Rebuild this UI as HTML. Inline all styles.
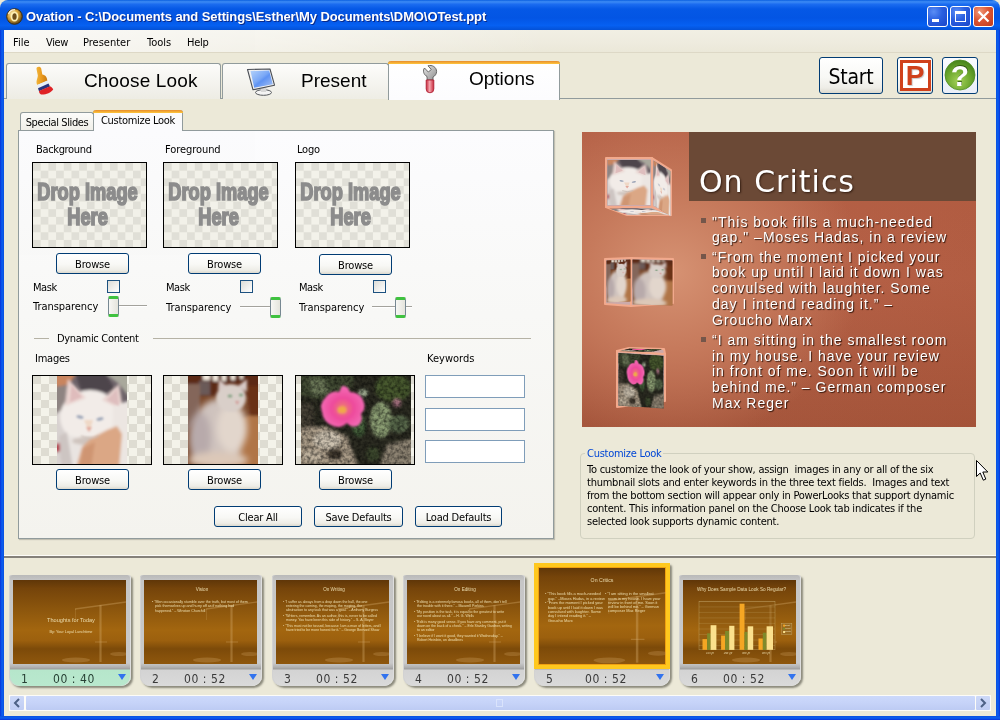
<!DOCTYPE html>
<html><head><meta charset="utf-8"><title>Ovation</title>
<style>
*{box-sizing:border-box;margin:0;padding:0}
html,body{width:1000px;height:720px;overflow:hidden;background:#ECE9D8}
body{will-change:transform;opacity:.9999}
body{position:relative;font-family:"DejaVu Sans Condensed","DejaVu Sans","Liberation Sans",sans-serif;font-size:11px;color:#000}
.abs,.abs-all>*{position:absolute}
div,span,svg{position:absolute}
/* ---------- window chrome ---------- */
#titlebar{left:0;top:0;width:1000px;height:30px;background:linear-gradient(180deg,#0a5fe0 0%,#3d8bf5 6%,#1b6cf0 14%,#0558e6 30%,#0355e4 60%,#0660f2 85%,#0451d6 100%);border-radius:8px 8px 0 0}
#title{left:26px;top:9px;color:#fff;font-family:"Liberation Sans",sans-serif;font-weight:bold;font-size:13px;letter-spacing:-0.1px;white-space:nowrap;text-shadow:1px 1px 0 #0a2a8a}
#bl{left:0;top:30px;width:4px;height:690px;background:linear-gradient(90deg,#0831d9,#0a5ff0 50%,#0a4fe0)}
#br{left:996px;top:30px;width:4px;height:690px;background:linear-gradient(90deg,#0a4fe0,#0a5ff0 50%,#0831d9)}
#bb{left:0;top:716px;width:1000px;height:4px;background:linear-gradient(180deg,#0a4fe0,#0a5ff0 50%,#0831d9)}
#menubar{left:4px;top:30px;width:992px;height:23px;background:linear-gradient(90deg,rgba(255,255,255,.7) 0%,rgba(255,255,255,.45) 25%,rgba(255,255,255,0) 55%),linear-gradient(180deg,#f1efe4 0%,#eeebde 60%,#ebe8d9 100%);border-bottom:1px solid #ddd8c6}
.mi{top:36px;font-size:11px;white-space:nowrap}
.wb{top:6px;width:21px;height:21px;border:1px solid #fff;border-radius:3px;background:radial-gradient(circle at 30% 25%,#5a8df5 0%,#2a5fe0 45%,#1a45c8 100%)}
.wb.close{background:radial-gradient(circle at 30% 25%,#f09a7a 0%,#dd5533 45%,#c03a1c 100%)}
/* ---------- big tabs ---------- */
.btab{top:63px;height:36px;border:1px solid #919b9c;border-bottom:none;border-radius:3px 3px 0 0;background:linear-gradient(180deg,#fdfdfb 0%,#f4f3ee 60%,#eeede5 100%)}
.btab.sel{top:61px;height:39px;background:linear-gradient(180deg,#fff 0%,#fcfcfe 100%);border-top:none}
.btab.sel:before{content:"";position:absolute;left:-1px;right:-1px;top:0;height:3px;background:linear-gradient(180deg,#e68b2c,#ffc73c);border-radius:3px 3px 0 0}
.btxt{font-family:"Liberation Sans",sans-serif;font-size:19px;white-space:nowrap}
#hline{left:4px;top:98px;width:992px;height:1px;background:#919b9c}
.xpbtn{border:1px solid #003c74;border-radius:3px;background:linear-gradient(180deg,#fff 0%,#f8f8f5 55%,#eeede7 85%,#dcd9ce 100%);text-align:center;white-space:nowrap}
/* ---------- left panel ---------- */
#panel{left:18px;top:130px;width:536px;height:409px;box-shadow:1px 1px 1px rgba(0,0,0,.18);border:1px solid #919b9c;background:linear-gradient(180deg,#fcfcfe 0%,#f8f8f6 45%,#f4f3ee 100%)}
.stab{letter-spacing:-.3px;border:1px solid #919b9c;border-bottom:none;border-radius:3px 3px 0 0;background:linear-gradient(180deg,#fdfdfb 0%,#f1f0ea 100%);font-size:11px;text-align:center;white-space:nowrap}
.stab.sel{background:#fcfcfe;border-top:none}
.stab.sel:before{content:"";position:absolute;left:-1px;right:-1px;top:0;height:3px;background:linear-gradient(180deg,#e68b2c,#ffc73c);border-radius:3px 3px 0 0}
.lbl{font-size:11px;white-space:nowrap;line-height:13px;letter-spacing:-.25px}
.box{border:1px solid #000;background:conic-gradient(#f4f3ea 25%,#dedcd2 0 50%,#f4f3ea 0 75%,#dedcd2 0) 0 0/16px 16px;overflow:hidden}
.drop{left:0;top:0;width:100%;height:100%;background:conic-gradient(#f3f2ea 25%,#e0dfd7 0 50%,#f3f2ea 0 75%,#e0dfd7 0) 0 0/15.4px 15.4px;font-family:"Liberation Sans",sans-serif;font-weight:bold;color:#8c8c8c;font-size:24px;line-height:25px;text-align:center;-webkit-text-stroke:1.7px #8c8c8c}
.drop span{position:absolute;left:-32px;right:-28px;transform:scaleX(.76)}
.bbtn{width:73px;height:21px;font-size:11px;line-height:21px;letter-spacing:-.2px}
.chk{width:13px;height:13px;border:1px solid #1c5180;background:linear-gradient(135deg,#dcdcd7,#fff)}
.trk{height:2px;border-top:1px solid #a3a29c;border-bottom:1px solid #fff}
.thm{width:11px;height:21px;border:1px solid #778892;border-radius:2px;background:linear-gradient(90deg,#f7f7f4,#e4e4dc);border-top:3px solid #3fc23f;border-bottom:3px solid #3fc23f}
.tf{width:100px;height:23px;border:1px solid #7f9db9;background:#fff}

/* ---------- preview ---------- */
#pv{left:582px;top:132px;width:394px;height:295px;overflow:hidden;background:radial-gradient(ellipse 190px 170px at 90px 140px,#d69273 0%,#c67a5c 45%,rgba(181,97,69,0) 100%),linear-gradient(90deg,rgba(160,70,40,0) 40%,rgba(160,70,40,.18) 100%),linear-gradient(180deg,#b46046 0%,#b66248 50%,#a5563c 100%)}
#pvt{left:107px;top:0;width:287px;height:69px;background:#6b4936}
#pvh{left:117px;top:30px;font-family:"DejaVu Sans","Liberation Sans",sans-serif;font-size:30px;letter-spacing:1px;line-height:40px;color:#fff;white-space:nowrap;text-shadow:1px 1px 2px rgba(40,20,10,.8)}
.pl{left:130px;font-family:"Liberation Sans",sans-serif;font-size:14px;line-height:16px;color:#fff;white-space:nowrap;letter-spacing:1px;text-shadow:1px 1px 1px rgba(40,15,5,.9)}
.pb{left:119px;width:5px;height:5px;background:#74564a}
/* ---------- group box ---------- */
#gb{left:580px;top:453px;width:395px;height:86px;border:1px solid #d0d0bf;border-radius:4px}
#gbl{left:585px;top:447px;padding:0 2px;background:#ECE9D8;color:#0046d5;font-size:11px;line-height:13px;white-space:nowrap;letter-spacing:-.27px}
.gt{left:587px;font-size:11px;line-height:13px;white-space:pre;letter-spacing:-.24px}
/* ---------- filmstrip ---------- */
#sep{left:4px;top:556px;width:992px;height:2px;background:#85817a;box-shadow:0 -1px 0 #fdfcf8}
.th{width:122px;height:111px;top:575px;border-radius:3px 3px 10px 10px;background:linear-gradient(180deg,#b9b9b9 0,#c6c6c6 6px,#c9c9c9 88px,#b2b2b2 92px,#9e9e9e 94px,#d3d3d3 95px,#dadada 111px);box-shadow:2px 2px 2px rgba(60,60,50,.55),inset -1px 0 0 #dedede,inset 1px 0 0 #d2d2d2}
.th.g{background:linear-gradient(180deg,#b9b9b9 0,#c6c6c6 6px,#c9c9c9 88px,#b2b2b2 92px,#9e9e9e 94px,#b6e6cb 95px,#b9e8ce 111px)}
.sl{left:4px;top:5px;width:113px;height:84px;overflow:hidden;background:linear-gradient(180deg,#5f3608 0%,#75440a 10%,#8c560d 35%,#a3660f 60%,#9c600e 72%,#7c4a09 82%,#85500b 90%,#8e570d 100%)}
.th .n,.th .t{top:96.5px;font-family:"DejaVu Sans Condensed","Liberation Sans",sans-serif;font-size:12px;line-height:15px;color:#3a3a3a;white-space:nowrap;letter-spacing:.55px}
.th.g .n,.th.g .t{color:#274034}
.th .n{left:12px}.th .t{left:44px}
.th .a{left:109px;top:99px;width:0;height:0;border-left:4.5px solid transparent;border-right:4.5px solid transparent;border-top:6px solid #3273ee}
.th.s{top:563px;width:136px;height:123px;border-radius:2px 2px 10px 10px;background:linear-gradient(180deg,#ffc81e 0,#ffc81e 105px,#a8a8a8 106px,#d3d3d3 107px,#dadada 123px)}
.th.s .sl{left:0;top:0;width:136px;height:106px;border:4px solid #ffc81e;box-shadow:inset 0 0 0 1px #f0a010}
.th.s .n,.th.s .t{top:108.5px}.th.s .t{left:51px}.th.s .a{top:111px;left:122px}
.st{color:#f3e6b8;font-family:"Liberation Sans",sans-serif;white-space:nowrap;transform-origin:0 0;opacity:.9}
/* ---------- scrollbar ---------- */
#sb{left:9px;top:695px;width:982px;height:16px;background:#fdfcf8}
.sba{top:1px;width:14px;height:14px;border-radius:1px;background:linear-gradient(180deg,#cdd9f8,#c0cdf3)}
#sbt{left:17px;top:1px;width:949px;height:14px;border-radius:1px;background:linear-gradient(180deg,#ccd9fb 0%,#c6d3f8 50%,#bdcbf3 100%)}
</style></head><body>
<div id="titlebar"></div>
<svg style="left:5.500px;top:7.500px" width="17" height="17" viewBox="0 0 17 17"><defs><radialGradient id="ig" cx=".4" cy=".35" r=".75"><stop offset="0" stop-color="#fff6c8"/><stop offset=".45" stop-color="#d8a238"/><stop offset="1" stop-color="#3c2c12"/></radialGradient></defs><circle cx="8.500" cy="8.500" r="7.800" fill="url(#ig)" stroke="#3a2c14" stroke-width="1"/><path d="M2.500 6A6.500 6.500 0 0 1 9 1.600" stroke="#fff" stroke-width="1.200" fill="none" opacity=".8"/><ellipse cx="8.500" cy="8.500" rx="3" ry="4.200" fill="#6b4c1c" stroke="#fff0b4" stroke-width="1.700"/></svg>
<div id="title">Ovation - C:\Documents and Settings\Esther\My Documents\DMO\OTest.ppt</div>
<div class="wb" style="left:927px"><div style="left:4px;top:12px;width:7px;height:3px;background:#fff"></div></div>
<div class="wb" style="left:950px"><div style="left:4px;top:4px;width:11px;height:11px;border:1px solid #fff;border-top:3px solid #fff"></div></div>
<div class="wb close" style="left:973px"><svg style="left:3px;top:3px" width="13" height="13" viewBox="0 0 13 13"><path d="M1.5 1.5L11.5 11.5M11.5 1.5L1.5 11.5" stroke="#fff" stroke-width="2.2"/></svg></div>
<div id="bl"></div><div id="br"></div><div id="bb"></div>
<div id="menubar"></div>
<div class="mi" style="left:13px">File</div>
<div class="mi" style="left:46px;letter-spacing:-.4px">View</div>
<div class="mi" style="left:83px">Presenter</div>
<div class="mi" style="left:147px">Tools</div>
<div class="mi" style="left:187px;letter-spacing:-.3px">Help</div>

<!-- big tabs -->
<div id="hline"></div>
<div class="btab" style="left:6px;width:215px"></div>
<div class="btab" style="left:222px;width:167px"></div>
<div class="btab sel" style="left:388px;width:172px"></div>
<svg style="left:30px;top:64px" width="30" height="34" viewBox="30 64 30 34"><defs><linearGradient id="bh" x1="0" y1="0" x2="1" y2="0"><stop offset="0" stop-color="#f2b43a"/><stop offset=".5" stop-color="#e8981c"/><stop offset="1" stop-color="#c87810"/></linearGradient></defs><path d="M36.500 69C36 66.500 40.500 66 41.200 68.500L42.300 74.500C45.500 74.800 47.200 77.500 47.300 81L37.200 85C35.500 81 37.800 78.500 37.800 75.500Z" fill="url(#bh)"/><path d="M37 85L47.300 80.600L48.500 83.600L38 88.300Z" fill="#e6effb"/><path d="M38 88.300L48.500 83.600L50 86.500L39 91.300Z" fill="#27347f"/><path d="M39 91L50 86.300C52 87.500 53 88.500 53.200 89.500C51 93 45 95 41 94.500C39.500 93.500 39 92.500 39 91Z" fill="#df2226"/></svg>
<svg style="left:244px;top:64px" width="36" height="34" viewBox="244 64 36 34"><defs><linearGradient id="ms" x1="0" y1="0" x2="1" y2="1"><stop offset="0" stop-color="#b4d2fb"/><stop offset=".45" stop-color="#7aa8f6"/><stop offset=".55" stop-color="#5f93f3"/><stop offset="1" stop-color="#a9c4f4"/></linearGradient></defs><ellipse cx="263.500" cy="92.500" rx="8" ry="2.800" fill="#f4f4f4" stroke="#55585c" stroke-width="1"/><path d="M260.500 88L266.500 87L266 92H261Z" fill="#d8d8d8"/><path d="M247.500 69.500L270 69L274.500 85.200L253 89.800Z" fill="#f2f2f2" stroke="#4a4e55" stroke-width="1.100" stroke-linejoin="round"/><path d="M250.500 71L269.200 70.500L272.800 84.200L254.200 87.800Z" fill="url(#ms)"/></svg>
<svg style="left:418px;top:62px" width="24" height="34" viewBox="418 62 24 34"><defs><linearGradient id="wh" x1="0" y1="0" x2="1" y2="0"><stop offset="0" stop-color="#c8283c"/><stop offset=".45" stop-color="#f4a6ae"/><stop offset="1" stop-color="#c8283c"/></linearGradient><linearGradient id="wg" x1="0" y1="0" x2="1" y2="1"><stop offset="0" stop-color="#e6e6e6"/><stop offset="1" stop-color="#8e8e8e"/></linearGradient></defs><path d="M427.200 80L427 76.500C423.500 74.500 422.500 70.500 424.500 68L428.300 72L431.300 69.500L428 65.800C432 64.500 436.500 67 436.600 71.500C436.600 74 435 76 433 77L433 80Z" fill="url(#wg)" stroke="#5a5a5a" stroke-width=".9" stroke-linejoin="round"/><path d="M426.200 80H433.800V89A3.800 3.800 0 0 1 426.200 89Z" fill="url(#wh)" stroke="#b02034" stroke-width=".9"/></svg>
<div class="btxt" style="left:84px;top:70px;letter-spacing:.15px">Choose Look</div>
<div class="btxt" style="left:301px;top:70px">Present</div>
<div class="btxt" style="left:469px;top:68px">Options</div>
<div class="xpbtn" style="left:819px;top:57px;width:64px;height:37px;font-size:21px;line-height:39px;letter-spacing:-.2px">Start</div>
<div class="xpbtn" style="left:897px;top:57px;width:36px;height:37px"><div style="left:2px;top:2px;width:31px;height:31px;border:3px solid #d0411c;background:#fff"></div><div style="left:0;top:1px;width:34px;text-align:center;font-family:'Liberation Sans',sans-serif;font-weight:bold;font-size:28px;line-height:34px;color:#d0411c;text-shadow:1px 1px 1px #c9c9c9">P</div></div>
<div class="xpbtn" style="left:942px;top:57px;width:36px;height:37px;background:linear-gradient(180deg,#fafcff,#e9eef8)"><svg style="left:1px;top:1px" width="32" height="32" viewBox="0 0 32 32"><defs><radialGradient id="qg" cx=".45" cy=".7" r=".75"><stop offset="0" stop-color="#a6d25a"/><stop offset=".55" stop-color="#6aa62c"/><stop offset="1" stop-color="#3f7d18"/></radialGradient></defs><circle cx="16" cy="16" r="15" fill="url(#qg)" stroke="#4d8a22" stroke-width=".8"/><text x="16.500" y="26" text-anchor="middle" font-family="Liberation Sans,sans-serif" font-weight="bold" font-size="30" fill="#1d3a0a" opacity=".7">?</text><text x="16" y="27" text-anchor="middle" font-family="Liberation Sans,sans-serif" font-weight="bold" font-size="30" fill="#fff">?</text></svg></div>

<!-- left panel -->
<div id="panel"></div>
<div class="stab" style="left:20px;top:112px;width:74px;height:18px;line-height:19px;letter-spacing:-.4px">Special Slides</div>
<div class="stab sel" style="left:93px;top:110px;width:90px;height:21px;line-height:22px">Customize Look</div>
<div id="pc" style="left:0;top:0">
<div class="lbl" style="left:36px;top:143px;letter-spacing:-.34px">Background</div>
<div class="lbl" style="left:165px;top:143px;letter-spacing:-.07px">Foreground</div>
<div class="lbl" style="left:297px;top:143px;letter-spacing:-.22px">Logo</div>
<div class="box" style="left:32px;top:162px;width:115px;height:86px"><div class="drop"><span style="top:16px">Drop Image</span><span style="top:41px">Here</span></div></div>
<div class="box" style="left:163px;top:162px;width:115px;height:86px"><div class="drop"><span style="top:16px">Drop Image</span><span style="top:41px">Here</span></div></div>
<div class="box" style="left:295px;top:162px;width:115px;height:86px"><div class="drop"><span style="top:16px">Drop Image</span><span style="top:41px">Here</span></div></div>
<div class="xpbtn bbtn" style="left:56px;top:253px">Browse</div>
<div class="xpbtn bbtn" style="left:188px;top:253px">Browse</div>
<div class="xpbtn bbtn" style="left:319px;top:254px">Browse</div>
<div class="lbl" style="left:33px;top:281px;letter-spacing:-.45px">Mask</div>
<div class="lbl" style="left:166px;top:281px;letter-spacing:-.45px">Mask</div>
<div class="lbl" style="left:299px;top:281px;letter-spacing:-.45px">Mask</div>
<div class="chk" style="left:107px;top:280px"></div>
<div class="chk" style="left:240px;top:280px"></div>
<div class="chk" style="left:373px;top:280px"></div>
<div class="lbl" style="left:33px;top:300px;letter-spacing:-.05px">Transparency</div>
<div class="lbl" style="left:166px;top:301px;letter-spacing:-.05px">Transparency</div>
<div class="lbl" style="left:299px;top:301px;letter-spacing:-.05px">Transparency</div>
<div class="trk" style="left:112px;top:305px;width:35px"></div>
<div class="trk" style="left:240px;top:306px;width:38px"></div>
<div class="trk" style="left:372px;top:306px;width:40px"></div>
<div class="thm" style="left:108px;top:296px"></div>
<div class="thm" style="left:270px;top:297px"></div>
<div class="thm" style="left:395px;top:297px"></div>
<div style="left:34px;top:338px;width:15px;height:1px;background:#b5b2a5"></div>
<div style="left:153px;top:338px;width:378px;height:1px;background:#b5b2a5"></div>
<div class="lbl" style="left:57px;top:332px;letter-spacing:-.31px">Dynamic Content</div>
<div class="lbl" style="left:35px;top:352px;letter-spacing:-.23px">Images</div>
<div class="lbl" style="left:427px;top:352px;letter-spacing:0">Keywords</div>
<div class="box" id="img1" style="left:32px;top:375px;width:120px;height:90px"><svg id="cat1" style="left:24px;top:0" width="70" height="88" viewBox="0 0 70 88"><defs><filter id="bl1" x="-10%" y="-10%" width="120%" height="120%"><feGaussianBlur stdDeviation="1.6"/></filter><filter id="bl2" x="-10%" y="-10%" width="120%" height="120%"><feGaussianBlur stdDeviation=".8"/></filter><filter id="bl3" x="-20%" y="-20%" width="140%" height="140%"><feGaussianBlur stdDeviation="3"/></filter><clipPath id="cp1"><rect width="70" height="88"/></clipPath></defs><g id="c1g" clip-path="url(#cp1)"><rect width="70" height="88" fill="#6c6268"/><g filter="url(#bl1)"><path d="M-4 -4H20L12 9L-4 11Z" fill="#c9855f"/><path d="M-4 11L12 9L10 40L-4 44Z" fill="#8e8482"/><path d="M46 -4H76V26L62 8Z" fill="#a9a89c"/><path d="M18 -4H48L58 14L40 20L24 14Z" fill="#4d444c"/><path d="M-4 40L10 30L30 92H-4Z" fill="#d8d2d0"/><path d="M-2 68L3 67L3 75L-2 77Z" fill="#b0283a"/><ellipse cx="33" cy="41" rx="30" ry="27" fill="#f2ece8"/><path d="M8 30L11 3L29 22Z" fill="#ead4d0"/><path d="M45 24L62 8L66 34Z" fill="#e8d2ce"/><path d="M56 30L74 24V92H54Z" fill="#ece6e2"/><path d="M8 58L30 64L26 92H2Z" fill="#e9e4e1"/><ellipse cx="30" cy="65" rx="15" ry="4" fill="#cfc4be"/><path d="M2 60L10 56L16 92H4Z" fill="#cdc5c2"/><path d="M19 92L25 71L33 63L50 54L60 50L65 58L62 92Z" fill="#dba785"/><path d="M26 72L38 66L34 92H22Z" fill="#cf9572"/></g><g filter="url(#bl2)"><path d="M13 26L14.500 9L25 21Z" fill="#dfbcbc"/><path d="M50 24L60 13L62 30Z" fill="#debebe"/><ellipse cx="23" cy="41" rx="3.600" ry="1.500" fill="#9aa3b6" transform="rotate(12 23 41)"/><ellipse cx="43" cy="43" rx="3.600" ry="1.500" fill="#9aa3b6" transform="rotate(-12 43 43)"/><path d="M29 51L35 51L32 56Z" fill="#e2a79a"/><path d="M27 44L36 44L34 51L30 51Z" fill="#efd8c6"/><path d="M24 60Q32 64 42 60" stroke="#c4b6ae" stroke-width="1.200" fill="none"/></g></g></svg></div>
<div class="box" id="img2" style="left:163px;top:375px;width:120px;height:90px"><svg id="cat2" style="left:24px;top:0" width="70" height="88" viewBox="0 0 70 88"><defs><clipPath id="cp2"><rect width="70" height="88"/></clipPath></defs><g id="c2g" clip-path="url(#cp2)"><rect width="70" height="88" fill="#7c4a2c"/><g filter="url(#bl1)"><rect x="-4" y="-4" width="78" height="24" fill="#5b2c18"/><rect x="15" y="-3" width="7" height="7" fill="#f4ece0"/><rect x="25" y="-3" width="5" height="8" fill="#f4ece0"/><rect x="34" y="-3" width="4" height="8" fill="#f4ece0"/><rect x="43" y="-3" width="4" height="7" fill="#f4ece0"/><rect x="52" y="-3" width="3" height="6" fill="#f0e4d4"/><rect x="11" y="5" width="11" height="14" fill="#6a5a58"/><path d="M-4 8H12V40L-4 60Z" fill="#84665a"/><path d="M50 44L74 34V92H40Z" fill="#b07446"/><path d="M58 10H74V40L62 40Z" fill="#6a3018"/></g><g filter="url(#bl3)"><ellipse cx="30" cy="58" rx="26" ry="35" fill="#cfc3be"/><ellipse cx="12" cy="62" rx="11" ry="26" fill="#b8aaab"/><ellipse cx="44" cy="52" rx="15" ry="24" fill="#e2d6cc"/><ellipse cx="30" cy="84" rx="30" ry="8" fill="#dcc8b8"/></g><g filter="url(#bl1)"><ellipse cx="43" cy="22" rx="15" ry="14" fill="#d9cfc9"/><path d="M30 14L31 3L39 10Z" fill="#d8cbc8"/><path d="M50 10L59 3L59 16Z" fill="#d8cbc8"/></g><g filter="url(#bl2)"><ellipse cx="42" cy="20" rx="2.400" ry="1.500" fill="#86a284"/><ellipse cx="53" cy="19" rx="2.200" ry="1.500" fill="#86a284"/><path d="M47 25L51 25L49.500 29Z" fill="#d29a96"/></g></g></svg></div>
<div class="box" id="img3" style="left:295px;top:375px;width:120px;height:90px"><svg id="flw" style="left:5px;top:0" width="110" height="88" viewBox="0 0 110 88"><defs><clipPath id="cp3"><rect width="110" height="88"/></clipPath><radialGradient id="fg" cx=".5" cy=".55" r=".5"><stop offset="0" stop-color="#f2a04a"/><stop offset=".2" stop-color="#ee6a80"/><stop offset=".5" stop-color="#ee4a9c"/><stop offset="1" stop-color="#f368b2"/></radialGradient><filter id="nz" x="0" y="0" width="100%" height="100%"><feTurbulence type="fractalNoise" baseFrequency=".3" numOctaves="2" seed="7"/><feColorMatrix values="0 0 0 0 0  0 0 0 0 0  0 0 0 0 0  1.800 0 0 0 -.62"/></filter></defs><g id="c3g" clip-path="url(#cp3)"><rect width="110" height="88" fill="#2b2b21"/><g filter="url(#bl1)"><path d="M-4 -4H56L50 12L20 24L-4 18Z" fill="#414a32"/><path d="M8 2L24 4L28 16L12 20Z" fill="#6c7858"/><ellipse cx="92" cy="12" rx="18" ry="14" fill="#46592f"/><ellipse cx="80" cy="44" rx="11" ry="18" fill="#8a9c72"/><ellipse cx="98" cy="48" rx="11" ry="9" fill="#56664a"/><ellipse cx="96" cy="27" rx="4" ry="4" fill="#b07888"/><ellipse cx="62" cy="17" rx="5" ry="4" fill="#98a48a"/><path d="M-4 52L24 50L46 60L58 92H-4Z" fill="#a79985"/><ellipse cx="26" cy="64" rx="14" ry="9" fill="#cdc2b0"/><ellipse cx="12" cy="80" rx="10" ry="6" fill="#bdb09c"/><path d="M-4 26L12 28L14 50L-4 54Z" fill="#453f34"/><ellipse cx="34" cy="78" rx="8" ry="6" fill="#40392e"/><path d="M86 68L114 62V92H78Z" fill="#8d8372"/><ellipse cx="58" cy="50" rx="7" ry="11" fill="#44603a"/><ellipse cx="72" cy="78" rx="7" ry="7" fill="#3e4a2e"/></g><rect width="110" height="88" fill="#15150e" filter="url(#nz)" opacity=".6"/><g filter="url(#bl2)"><path d="M41 10Q47 9 49 16Q58 16 62 24Q66 32 60 38Q63 46 56 50Q50 52 46 47Q40 53 32 50Q22 46 21 36Q18 28 24 22Q30 14 38 16Z" fill="url(#fg)"/><ellipse cx="41" cy="34" rx="4.500" ry="3.500" fill="#f0a84a"/></g></g></svg></div>
<div class="xpbtn bbtn" style="left:56px;top:469px">Browse</div>
<div class="xpbtn bbtn" style="left:188px;top:469px">Browse</div>
<div class="xpbtn bbtn" style="left:319px;top:469px">Browse</div>
<div class="tf" style="left:425px;top:375px"></div>
<div class="tf" style="left:425px;top:408px"></div>
<div class="tf" style="left:425px;top:440px"></div>
<div class="xpbtn bbtn" style="left:214px;top:506px;width:88px">Clear All</div>
<div class="xpbtn bbtn" style="left:314px;top:506px;width:89px">Save Defaults</div>
<div class="xpbtn bbtn" style="left:415px;top:506px;width:87px">Load Defaults</div>
</div>

<!-- preview -->
<div id="pv">
<svg style="left:0;top:0" width="395" height="296" viewBox="0 0 395 296">
<g stroke="#f2a98c" stroke-width="2" stroke-linejoin="round" fill="#caa">
<polygon points="24,26 70,26 70,75 24,75"/><polygon points="70,26 89,38 89,83 70,75"/><polygon points="24,75 70,75 89,83 45,83"/>
<polygon points="23,127 49,126 49,174 23,172"/><polygon points="49,126 91,127 91,171 49,174"/>
<polygon points="35,219 83,222 83,269 35,275"/><polygon points="35,219 47,216 82,217 83,222"/>
</g>
<use href="#c1g" transform="matrix(.614 0 0 .511 25.500 28)"/>
<use href="#c1g" transform="matrix(.243 .154 0 .511 71.500 28.500)"/>
<use href="#c1g" transform="matrix(.6 0 .21 .07 27 76.500)"/>
<use href="#c2g" transform="matrix(.343 -.013 0 .477 24.500 128.500)"/>
<use href="#c2g" transform="matrix(.571 .013 0 .511 50.500 127.500)"/>
<use href="#c3g" transform="matrix(.41 .025 0 .6 36.500 221)"/>
<use href="#c3g" transform="matrix(.3 .008 -.12 .03 47.500 216.500)"/>
</svg><div id="pvt"></div>
<div id="pvh">On Critics</div>
<div class="pb" style="top:86px"></div>
<div class="pl" style="top:82px">"This book fills a much-needed</div>
<div class="pl" style="top:97px">gap." –Moses Hadas, in a review</div>
<div class="pb" style="top:122px"></div>
<div class="pl" style="top:117px">“From the moment I picked your</div>
<div class="pl" style="top:132px">book up until I laid it down I was</div>
<div class="pl" style="top:148px">convulsed with laughter. Some</div>
<div class="pl" style="top:164px">day I intend reading it.” –</div>
<div class="pl" style="top:180px">Groucho Marx</div>
<div class="pb" style="top:205px"></div>
<div class="pl" style="top:200px">“I am sitting in the smallest room</div>
<div class="pl" style="top:216px">in my house. I have your review</div>
<div class="pl" style="top:231px">in front of me. Soon it will be</div>
<div class="pl" style="top:247px">behind me.” – German composer</div>
<div class="pl" style="top:263px">Max Reger</div>
</div>
<!-- group box -->
<div id="gb"></div>
<div id="gbl">Customize Look</div>
<div class="gt" style="top:463px">To customize the look of your show, assign  images in any or all of the six</div>
<div class="gt" style="top:476px">thumbnail slots and enter keywords in the three text fields.  Images and text</div>
<div class="gt" style="top:489px">from the bottom section will appear only in PowerLooks that support dynamic</div>
<div class="gt" style="top:502px">content. This information panel on the Choose Look tab indicates if the</div>
<div class="gt" style="top:515px">selected look supports dynamic content.</div>
<svg style="left:975px;top:459px" width="14" height="23" viewBox="-1 -1 14 23"><path d="M.5 .5V16.500L4.200 13L7.300 20.200L9.800 19.100L6.800 12H11.800Z" fill="#fff" stroke="#000" stroke-width="1" stroke-linejoin="miter"/></svg>
<!-- filmstrip -->
<div id="sep"></div>
<div class="th g" style="left:9px"><div class="sl"><svg style="left:0;top:0" width="113" height="84" viewBox="0 0 113 84" preserveAspectRatio="none"><g stroke="#d2a868" stroke-opacity=".38" fill="none"><path d="M62 29L113 22" stroke-width="1.300"/><path d="M87.500 25V82" stroke-width="2.200"/><path d="M82 62H94" stroke-width="1"/><path d="M62.500 29V40" stroke-width=".6"/></g><ellipse cx="63" cy="80" rx="14" ry="2.500" fill="#c99a5c" fill-opacity=".35"/><ellipse cx="106" cy="74" rx="9" ry="2" fill="#c99a5c" fill-opacity=".3"/></svg><div class="st" style="left:-26.0px;width:300px;text-align:center;top:36.6px;font-size:10px;line-height:12px;transform:scale(0.560)">Thoughts for Today</div><div class="st" style="left:1.0px;width:300px;text-align:center;top:49.7px;font-size:10px;line-height:12px;transform:scale(0.380)">By: Your Loyal Lunchtime</div></div><div class="n">1</div><div class="t">00 : 40</div><div class="a"></div></div>
<div class="th" style="left:140px"><div class="sl"><svg style="left:0;top:0" width="113" height="84" viewBox="0 0 113 84" preserveAspectRatio="none"><g stroke="#d2a868" stroke-opacity=".38" fill="none"><path d="M62 29L113 22" stroke-width="1.300"/><path d="M87.500 25V82" stroke-width="2.200"/><path d="M82 62H94" stroke-width="1"/><path d="M62.500 29V40" stroke-width=".6"/></g><ellipse cx="63" cy="80" rx="14" ry="2.500" fill="#c99a5c" fill-opacity=".35"/><ellipse cx="106" cy="74" rx="9" ry="2" fill="#c99a5c" fill-opacity=".3"/></svg><div class="st" style="left:-11.0px;width:300px;text-align:center;top:7.2px;font-size:10px;line-height:12px;transform:scale(0.460)">Vision</div><div class="st" style="left:8px;top:20.3px;font-size:10px;line-height:12px;transform:scale(0.360)">• “Men occasionally stumble over the truth, but most of them</div><div class="st" style="left:11px;top:24.4px;font-size:10px;line-height:12px;transform:scale(0.360)">pick themselves up and hurry off as if nothing had</div><div class="st" style="left:11px;top:28.5px;font-size:10px;line-height:12px;transform:scale(0.360)">happened.” – Winston Churchill</div></div><div class="n">2</div><div class="t">00 : 52</div><div class="a"></div></div>
<div class="th" style="left:272px"><div class="sl"><svg style="left:0;top:0" width="113" height="84" viewBox="0 0 113 84" preserveAspectRatio="none"><g stroke="#d2a868" stroke-opacity=".38" fill="none"><path d="M62 29L113 22" stroke-width="1.300"/><path d="M87.500 25V82" stroke-width="2.200"/><path d="M82 62H94" stroke-width="1"/><path d="M62.500 29V40" stroke-width=".6"/></g><ellipse cx="63" cy="80" rx="14" ry="2.500" fill="#c99a5c" fill-opacity=".35"/><ellipse cx="106" cy="74" rx="9" ry="2" fill="#c99a5c" fill-opacity=".3"/></svg><div class="st" style="left:-11.0px;width:300px;text-align:center;top:6.7px;font-size:10px;line-height:12px;transform:scale(0.460)">On Writing</div><div class="st" style="left:7px;top:20.2px;font-size:10px;line-height:12px;transform:scale(0.350)">• “I suffer as always from a drop down the hall, the one</div><div class="st" style="left:10px;top:24.3px;font-size:10px;line-height:12px;transform:scale(0.350)">entering the coming, the moping, the moping, the</div><div class="st" style="left:10px;top:28.4px;font-size:10px;line-height:12px;transform:scale(0.350)">abstraction to any task that was a goal.” – Anthony Burgess</div><div class="st" style="left:7px;top:34.2px;font-size:10px;line-height:12px;transform:scale(0.350)">• “Writers, remember. As an author, this is, never to be called</div><div class="st" style="left:10px;top:38.3px;font-size:10px;line-height:12px;transform:scale(0.350)">money. You have been this side of history.” – S. A. Boyer</div><div class="st" style="left:7px;top:44.2px;font-size:10px;line-height:12px;transform:scale(0.350)">• “This must not be tossed, because I am a man of letters, and I</div><div class="st" style="left:10px;top:48.3px;font-size:10px;line-height:12px;transform:scale(0.350)">have tried to be more honest for it.” – George Bernard Shaw</div></div><div class="n">3</div><div class="t">00 : 52</div><div class="a"></div></div>
<div class="th" style="left:403px"><div class="sl"><svg style="left:0;top:0" width="113" height="84" viewBox="0 0 113 84" preserveAspectRatio="none"><g stroke="#d2a868" stroke-opacity=".38" fill="none"><path d="M62 29L113 22" stroke-width="1.300"/><path d="M87.500 25V82" stroke-width="2.200"/><path d="M82 62H94" stroke-width="1"/><path d="M62.500 29V40" stroke-width=".6"/></g><ellipse cx="63" cy="80" rx="14" ry="2.500" fill="#c99a5c" fill-opacity=".35"/><ellipse cx="106" cy="74" rx="9" ry="2" fill="#c99a5c" fill-opacity=".3"/></svg><div class="st" style="left:-11.0px;width:300px;text-align:center;top:6.7px;font-size:10px;line-height:12px;transform:scale(0.460)">On Editing</div><div class="st" style="left:7px;top:20.2px;font-size:10px;line-height:12px;transform:scale(0.350)">• “Editing is a extremely famous books, all of them, don’t tell</div><div class="st" style="left:10px;top:24.3px;font-size:10px;line-height:12px;transform:scale(0.350)">the trouble with it there.” – Maxwell Perkins</div><div class="st" style="left:7px;top:30.0px;font-size:10px;line-height:12px;transform:scale(0.350)">• “My position is the task, it is equal to the greatest to write</div><div class="st" style="left:10px;top:34.1px;font-size:10px;line-height:12px;transform:scale(0.350)">our novel about us all.” – H. G. Wells</div><div class="st" style="left:7px;top:39.9px;font-size:10px;line-height:12px;transform:scale(0.350)">• “Edit is many good sense. If you have any comment, put it</div><div class="st" style="left:10px;top:44.0px;font-size:10px;line-height:12px;transform:scale(0.350)">down on the back of a check.” – Erle Stanley Gardner, writing</div><div class="st" style="left:10px;top:48.1px;font-size:10px;line-height:12px;transform:scale(0.350)">to an editor</div><div class="st" style="left:7px;top:53.9px;font-size:10px;line-height:12px;transform:scale(0.350)">• “I believe if I want it good, they wanted it Wednesday.” –</div><div class="st" style="left:10px;top:58.0px;font-size:10px;line-height:12px;transform:scale(0.350)">Robert Heinlein, on deadlines</div></div><div class="n">4</div><div class="t">00 : 52</div><div class="a"></div></div>
<div class="th s" style="left:534px"><div class="sl"><svg style="left:0;top:0" width="128" height="98" viewBox="0 0 113 84" preserveAspectRatio="none"><g stroke="#d2a868" stroke-opacity=".38" fill="none"><path d="M62 29L113 22" stroke-width="1.300"/><path d="M87.500 25V82" stroke-width="2.200"/><path d="M82 62H94" stroke-width="1"/><path d="M62.500 29V40" stroke-width=".6"/></g><ellipse cx="63" cy="80" rx="14" ry="2.500" fill="#c99a5c" fill-opacity=".35"/><ellipse cx="106" cy="74" rx="9" ry="2" fill="#c99a5c" fill-opacity=".3"/></svg><div class="st" style="left:-14.0px;width:300px;text-align:center;top:9.9px;font-size:10px;line-height:12px;transform:scale(0.520)">On Critics</div><div class="st" style="left:7px;top:24.2px;font-size:10px;line-height:12px;transform:scale(0.390)">• “This book fills a much-needed</div><div class="st" style="left:10px;top:28.5px;font-size:10px;line-height:12px;transform:scale(0.390)">gap.” –Moses Hadas, in a review</div><div class="st" style="left:7px;top:33.3px;font-size:10px;line-height:12px;transform:scale(0.390)">• “From the moment I picked your</div><div class="st" style="left:10px;top:37.6px;font-size:10px;line-height:12px;transform:scale(0.390)">book up until I laid it down I was</div><div class="st" style="left:10px;top:41.9px;font-size:10px;line-height:12px;transform:scale(0.390)">convulsed with laughter. Some</div><div class="st" style="left:10px;top:46.2px;font-size:10px;line-height:12px;transform:scale(0.390)">day I intend reading it.” –</div><div class="st" style="left:10px;top:50.5px;font-size:10px;line-height:12px;transform:scale(0.390)">Groucho Marx</div><div class="st" style="left:67px;top:24.2px;font-size:10px;line-height:12px;transform:scale(0.390)">• “I am sitting in the smallest</div><div class="st" style="left:70px;top:28.5px;font-size:10px;line-height:12px;transform:scale(0.390)">room in my house. I have your</div><div class="st" style="left:70px;top:32.8px;font-size:10px;line-height:12px;transform:scale(0.390)">review in front of me. Soon it</div><div class="st" style="left:70px;top:37.1px;font-size:10px;line-height:12px;transform:scale(0.390)">will be behind me.” – German</div><div class="st" style="left:70px;top:41.4px;font-size:10px;line-height:12px;transform:scale(0.390)">composer Max Reger</div></div><div class="n">5</div><div class="t">00 : 52</div><div class="a"></div></div>
<div class="th" style="left:679px"><div class="sl"><svg style="left:0;top:0" width="113" height="84" viewBox="0 0 113 84" preserveAspectRatio="none"><g stroke="#d2a868" stroke-opacity=".38" fill="none"><path d="M62 29L113 22" stroke-width="1.300"/><path d="M87.500 25V82" stroke-width="2.200"/><path d="M82 62H94" stroke-width="1"/><path d="M62.500 29V40" stroke-width=".6"/></g><ellipse cx="63" cy="80" rx="14" ry="2.500" fill="#c99a5c" fill-opacity=".35"/><ellipse cx="106" cy="74" rx="9" ry="2" fill="#c99a5c" fill-opacity=".3"/></svg><svg style="left:0;top:0" width="113" height="84" viewBox="0 0 113 84"><rect x="16.0" y="21.4" width="76.0" height="48.4" fill="#8a5a14" fill-opacity=".35" stroke="#d9c48a" stroke-width=".4" stroke-opacity=".7"/><path d="M16.0 21.4H92.0" stroke="#e6d6a0" stroke-width=".3" stroke-opacity=".5"/><path d="M16.0 26.9H92.0" stroke="#e6d6a0" stroke-width=".3" stroke-opacity=".5"/><path d="M16.0 32.4H92.0" stroke="#e6d6a0" stroke-width=".3" stroke-opacity=".5"/><path d="M16.0 37.9H92.0" stroke="#e6d6a0" stroke-width=".3" stroke-opacity=".5"/><path d="M16.0 43.4H92.0" stroke="#e6d6a0" stroke-width=".3" stroke-opacity=".5"/><path d="M16.0 49.0H92.0" stroke="#e6d6a0" stroke-width=".3" stroke-opacity=".5"/><path d="M16.0 54.5H92.0" stroke="#e6d6a0" stroke-width=".3" stroke-opacity=".5"/><path d="M16.0 60.0H92.0" stroke="#e6d6a0" stroke-width=".3" stroke-opacity=".5"/><path d="M16.0 65.5H92.0" stroke="#e6d6a0" stroke-width=".3" stroke-opacity=".5"/><rect x="19.5" y="59.1" width="4.6" height="10.7" fill="#f5a623"/><rect x="24.1" y="53.3" width="3.5" height="16.5" fill="#7f8a2a"/><rect x="27.6" y="45.2" width="5.8" height="24.7" fill="#fbe08c"/><rect x="38.1" y="55.6" width="4.1" height="14.2" fill="#f5a623"/><rect x="42.1" y="51.0" width="4.1" height="18.9" fill="#7f8a2a"/><rect x="46.2" y="45.8" width="5.2" height="24.1" fill="#fbe08c"/><rect x="56.6" y="23.7" width="4.9" height="46.1" fill="#f5a623"/><rect x="61.5" y="51.9" width="3.2" height="18.0" fill="#7f8a2a"/><rect x="64.7" y="46.3" width="5.5" height="23.5" fill="#fbe08c"/><rect x="75.5" y="58.5" width="4.4" height="11.3" fill="#f5a623"/><rect x="79.8" y="52.7" width="3.8" height="17.1" fill="#7f8a2a"/><rect x="83.6" y="46.3" width="6.4" height="23.5" fill="#fbe08c"/><rect x="98.7" y="43.2" width="10.2" height="11.6" fill="#9a6a20" stroke="#d9c48a" stroke-width=".3"/><rect x="100.1" y="44.6" width="2" height="2" fill="#f5a623"/><rect x="100.1" y="47.8" width="2" height="2" fill="#7f8a2a"/><rect x="100.1" y="51.0" width="2" height="2" fill="#fbe08c"/></svg><div class="st" style="left:-12.5px;width:300px;text-align:center;top:7.2px;font-size:10px;line-height:12px;transform:scale(0.470)">Why Does Sample Data Look So Regular?</div><div class="st" style="left:-12.5px;width:300px;text-align:center;top:71.5px;font-size:10px;line-height:12px;transform:scale(0.260)">1st Qtr</div><div class="st" style="left:5.7px;width:300px;text-align:center;top:71.5px;font-size:10px;line-height:12px;transform:scale(0.260)">2nd Qtr</div><div class="st" style="left:24.3px;width:300px;text-align:center;top:71.5px;font-size:10px;line-height:12px;transform:scale(0.260)">3rd Qtr</div><div class="st" style="left:43.7px;width:300px;text-align:center;top:71.5px;font-size:10px;line-height:12px;transform:scale(0.260)">4th Qtr</div><div class="st" style="left:102.4408352668213px;top:43.5px;font-size:10px;line-height:12px;transform:scale(0.240)">East</div><div class="st" style="left:102.4408352668213px;top:46.6px;font-size:10px;line-height:12px;transform:scale(0.240)">West</div><div class="st" style="left:102.4408352668213px;top:49.8px;font-size:10px;line-height:12px;transform:scale(0.240)">North</div></div><div class="n">6</div><div class="t">00 : 52</div><div class="a"></div></div>
<div id="sb"><div class="sba" style="left:1px"><svg style="left:3px;top:2px" width="8" height="10" viewBox="0 0 8 10"><path d="M6 1L2 5L6 9" fill="none" stroke="#4d6185" stroke-width="2"/></svg></div><div id="sbt"><div style="left:470px;top:3px;width:7px;height:8px;border:1px solid #dfe7fc;opacity:.8"></div></div><div class="sba" style="left:967px"><svg style="left:3px;top:2px" width="8" height="10" viewBox="0 0 8 10"><path d="M2 1L6 5L2 9" fill="none" stroke="#4d6185" stroke-width="2"/></svg></div></div>
</body></html>
